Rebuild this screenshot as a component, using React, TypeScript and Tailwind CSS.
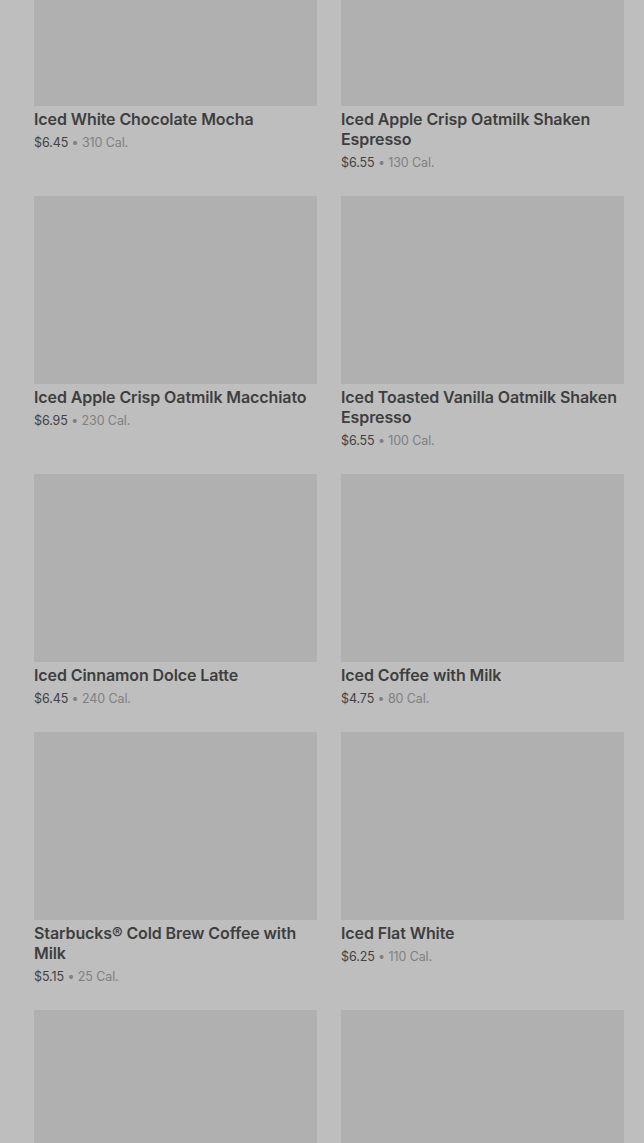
const items = [
  { name: 'Iced White Chocolate Mocha', price: '$6.45', cal: '310 Cal.' },
  { name: 'Iced Apple Crisp Oatmilk Shaken Espresso', price: '$6.55', cal: '130 Cal.' },
  { name: 'Iced Apple Crisp Oatmilk Macchiato', price: '$6.95', cal: '230 Cal.' },
  { name: 'Iced Toasted Vanilla Oatmilk Shaken Espresso', price: '$6.55', cal: '100 Cal.' },
  { name: 'Iced Cinnamon Dolce Latte', price: '$6.45', cal: '240 Cal.' },
  { name: 'Iced Coffee with Milk', price: '$4.75', cal: '80 Cal.' },
  { name: 'Starbucks® Cold Brew Coffee with Milk', price: '$5.15', cal: '25 Cal.' },
  { name: 'Iced Flat White', price: '$6.25', cal: '110 Cal.' },
  { name: '', price: '', cal: '' },
  { name: '', price: '', cal: '' },
]

function Card({ name, price, cal }: { name: string; price: string; cal: string }) {
  return (
    <div>
      <div className="h-[188px] bg-[#b0b0b0]" />
      {name && (
        <div className="mt-[3px]">
          <h3 className="text-[16px] leading-[20px] font-semibold text-[#3e3e3e] tracking-[-0.1px]">{name}</h3>
          <p className="mt-[5px] text-[12.5px] leading-[18px] text-[#424242] tracking-[-0.1px]">
            {price} <span className="text-[#808080]">• {cal}</span>
          </p>
        </div>
      )}
    </div>
  )
}

export default function App() {
  return (
    <div className="h-[1143px] overflow-hidden bg-[#bebebe]" style={{ fontFamily: 'Inter, "Noto Sans", sans-serif' }}>
      <div className="-mt-[82px] pl-[34px] pr-[20px] grid grid-cols-2 gap-x-[24px] gap-y-[24px]">
        {items.map((item, i) => (
          <Card key={i} {...item} />
        ))}
      </div>
    </div>
  )
}
